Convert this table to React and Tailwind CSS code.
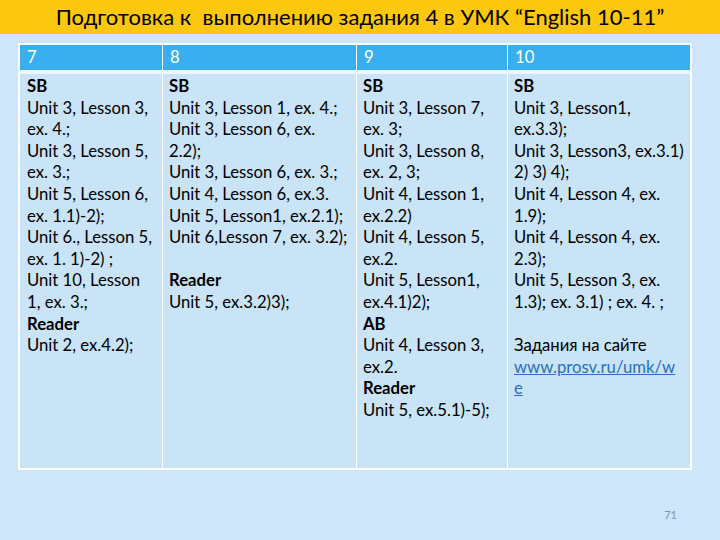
import React from "react";

const B = ({ children }) => <div className="font-bold">{children}</div>;
const L = ({ children }) => <div>{children}</div>;
const E = () => <div>&nbsp;</div>;

export default function App() {
  return (
    <div
      className="w-[720px] h-[540px] bg-[#cde6f9] flex flex-col overflow-hidden text-black"
      style={{ fontFamily: "Lato, 'Open Sans', sans-serif" }}
    >
      <div className="h-[34px] bg-[#fcc70f] flex items-center justify-center text-[22px] leading-none pb-[1px] whitespace-pre">
        Подготовка к  выполнению задания 4 в УМК “English 10-11”
      </div>
      <div className="pl-[18px] pt-[9px]">
        <div className="w-[674px] border-2 border-white grid grid-cols-[143px_194px_151px_182px] text-[16.7px] leading-[21.6px]">
          <div className="bg-[#3aaff0] h-[25px] pl-[7px] flex items-center text-white border-r border-white">7</div>
          <div className="bg-[#3aaff0] h-[25px] pl-[7px] flex items-center text-white border-r border-white">8</div>
          <div className="bg-[#3aaff0] h-[25px] pl-[7px] flex items-center text-white border-r border-white">9</div>
          <div className="bg-[#3aaff0] h-[25px] pl-[7px] flex items-center text-white">10</div>

          <div className="col-span-4 h-[4px] bg-[#eef5fb]"></div>

          <div className="bg-[#c9e3f7] h-[394px] pl-[7px] pt-[2px] border-r border-white">
            <B>SB</B>
            <L>Unit 3, Lesson 3,</L>
            <L>ex. 4.;</L>
            <L>Unit 3, Lesson 5,</L>
            <L>ex. 3.;</L>
            <L>Unit 5, Lesson 6,</L>
            <L>ex. 1.1)-2);</L>
            <L>Unit 6., Lesson 5,</L>
            <L>ex. 1. 1)-2) ;</L>
            <L>Unit 10, Lesson</L>
            <L>1, ex. 3.;</L>
            <B>Reader</B>
            <L>Unit 2, ex.4.2);</L>
          </div>
          <div className="bg-[#c9e3f7] pl-[6px] pt-[2px] border-r border-white">
            <B>SB</B>
            <L>Unit 3, Lesson 1, ex. 4.;</L>
            <L>Unit 3, Lesson 6, ex.</L>
            <L>2.2);</L>
            <L>Unit 3, Lesson 6, ex. 3.;</L>
            <L>Unit 4, Lesson 6, ex.3.</L>
            <L>Unit 5, Lesson1, ex.2.1);</L>
            <L>Unit 6,Lesson 7, ex. 3.2);</L>
            <E />
            <B>Reader</B>
            <L>Unit 5, ex.3.2)3);</L>
          </div>
          <div className="bg-[#c9e3f7] pl-[6px] pt-[2px] border-r border-white">
            <B>SB</B>
            <L>Unit 3, Lesson 7,</L>
            <L>ex. 3;</L>
            <L>Unit 3, Lesson 8,</L>
            <L>ex. 2, 3;</L>
            <L>Unit 4, Lesson 1,</L>
            <L>ex.2.2)</L>
            <L>Unit 4, Lesson 5,</L>
            <L>ex.2.</L>
            <L>Unit 5, Lesson1,</L>
            <L>ex.4.1)2);</L>
            <B>AB</B>
            <L>Unit 4, Lesson 3,</L>
            <L>ex.2.</L>
            <B>Reader</B>
            <L>Unit 5, ex.5.1)-5);</L>
          </div>
          <div className="bg-[#c9e3f7] pl-[6px] pt-[2px]">
            <B>SB</B>
            <L>Unit 3, Lesson1,</L>
            <L>ex.3.3);</L>
            <L>Unit 3, Lesson3, ex.3.1)</L>
            <L>2) 3) 4);</L>
            <L>Unit 4, Lesson 4, ex.</L>
            <L>1.9);</L>
            <L>Unit 4, Lesson 4, ex.</L>
            <L>2.3);</L>
            <L>Unit 5, Lesson 3, ex.</L>
            <L>1.3); ex. 3.1) ; ex. 4. ;</L>
            <E />
            <L>Задания на сайте</L>
            <div className="text-[#2a6fc4] underline">www.prosv.ru/umk/w</div>
            <div className="text-[#2a6fc4] underline">e</div>
          </div>
        </div>
      </div>
      <div className="flex justify-end pr-[43px] pt-[37px] text-[11px] text-[#7d95a8]">71</div>
    </div>
  );
}
